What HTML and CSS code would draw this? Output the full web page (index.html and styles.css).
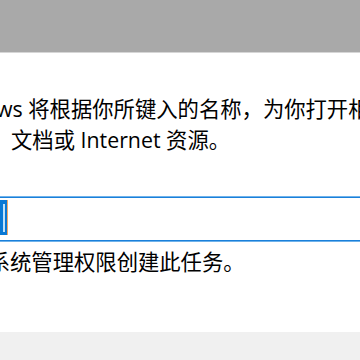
FILE: index.html
```html
<!DOCTYPE html>
<html lang="zh-CN">
<head>
<meta charset="utf-8">
<title>运行</title>
<link rel="stylesheet" href="styles.css">
</head>
<body>
<div class="page">
  <div class="titlebar"></div>
  <div class="main">
    <div class="desc">
      <div class="line line1">Windows 将根据你所键入的名称，为你打开相应的程序、文件夹、</div>
      <div class="line line2">文档或 Internet 资源。</div>
    </div>
    <div class="field">
      <span class="sel"><span class="caret"></span></span>
    </div>
    <div class="line line3">使用系统管理权限创建此任务。</div>
  </div>
  <div class="footer"></div>
</div>
</body>
</html>
```
FILE: styles.css
```css
html, body {
  margin: 0;
  padding: 0;
  background: #ffffff;
}
body {
  width: 360px;
  height: 360px;
  overflow: hidden;
  font-family: "Open Sans", "Noto Sans CJK SC", sans-serif;
  font-size: 21.33px;
  color: #000000;
}
.page {
  display: flex;
  flex-direction: column;
  height: 360px;
  width: 360px;
  overflow: hidden;
}
.titlebar {
  height: 52px;
  background: #a9a9a9;
  border-bottom: 1px solid #d6d6d6;
  flex: none;
}
.main {
  flex: 1;
  background: #ffffff;
  display: flex;
  flex-direction: column;
  overflow: hidden;
}
.desc {
  padding-top: 40px;
}
.line {
  line-height: 31px;
  height: 31px;
  white-space: nowrap;
}
.line1 {
  margin-left: -68px;
}
.line2 {
  padding-left: 11px;
}
.field {
  margin-top: 42px;
  margin-left: -20px;
  width: 420px;
  height: 40px;
  border: 1px solid #1a80da;
  box-shadow: 0 0 0 1px #6fb2ea;
  background: #ffffff;
  display: flex;
  align-items: flex-start;
  padding-top: 2px;
  box-sizing: content-box;
}
.sel {
  display: flex;
  justify-content: flex-end;
  align-items: center;
  width: 26px;
  height: 35px;
  background: #0a78d4;
  border-right: 1px solid #f2a867;
}
.caret {
  width: 2px;
  height: 28px;
  margin-right: 2px;
  background: #bfe2fb;
}
.line3 {
  margin-top: 5px;
  margin-left: -54px;
}
.footer {
  height: 28px;
  background: #f0f0f0;
  flex: none;
}
```
